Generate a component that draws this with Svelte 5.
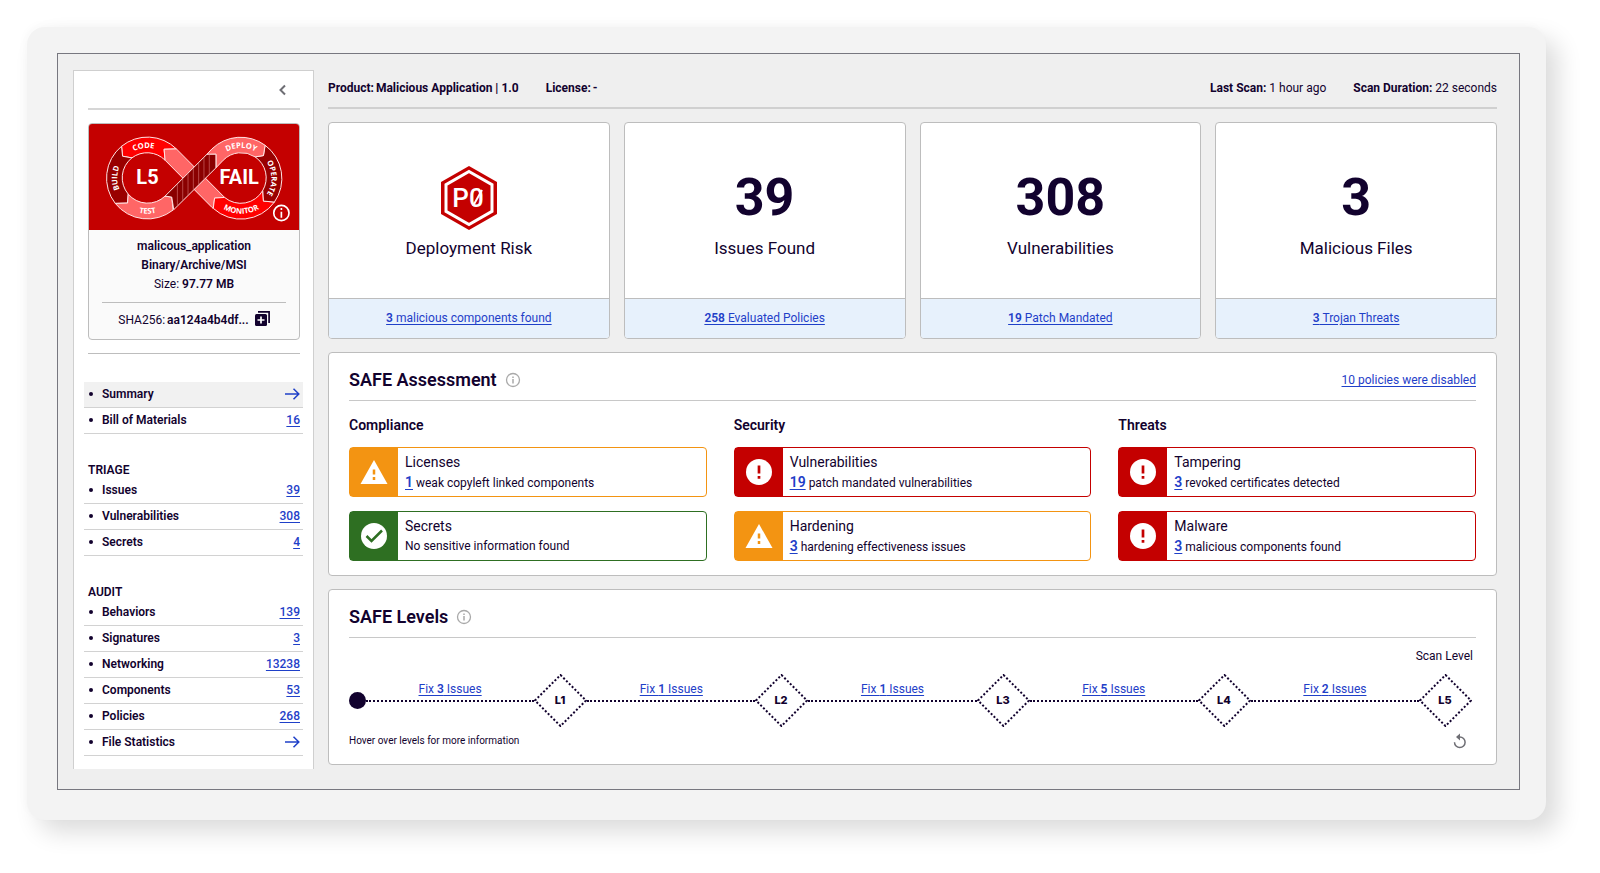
<script>
	const pages = [
		{ name: "Summary", count: null, active: true },
		{ name: "Bill of Materials", count: 16 }
	];

	const triage = [
		{ name: "Issues", count: 39 },
		{ name: "Vulnerabilities", count: 308 },
		{ name: "Secrets", count: 4 }
	];

	const audit = [
		{ name: "Behaviors", count: 139 },
		{ name: "Signatures", count: 3 },
		{ name: "Networking", count: 13238 },
		{ name: "Components", count: 53 },
		{ name: "Policies", count: 268 },
		{ name: "File Statistics", count: null }
	];

	const navGroups = [
		{ title: "", items: pages },
		{ title: "TRIAGE", items: triage },
		{ title: "AUDIT", items: audit }
	];

	const cards = [
		{ value: null, label: "Deployment Risk", count: 3, text: "malicious components found" },
		{ value: 39, label: "Issues Found", count: 258, text: "Evaluated Policies" },
		{ value: 308, label: "Vulnerabilities", count: 19, text: "Patch Mandated" },
		{ value: 3, label: "Malicious Files", count: 3, text: "Trojan Threats" }
	];

	const assessment = [
		{
			title: "Compliance",
			checks: [
				{ status: "warning", name: "Licenses", count: 1, text: "weak copyleft linked components" },
				{ status: "pass", name: "Secrets", count: 0, text: "No sensitive information found" }
			]
		},
		{
			title: "Security",
			checks: [
				{ status: "fail", name: "Vulnerabilities", count: 19, text: "patch mandated vulnerabilities" },
				{ status: "warning", name: "Hardening", count: 3, text: "hardening effectiveness issues" }
			]
		},
		{
			title: "Threats",
			checks: [
				{ status: "fail", name: "Tampering", count: 3, text: "revoked certificates detected" },
				{ status: "fail", name: "Malware", count: 3, text: "malicious components found" }
			]
		}
	];

	const levels = [
		{ name: "L1", fixes: 3 },
		{ name: "L2", fixes: 1 },
		{ name: "L3", fixes: 1 },
		{ name: "L4", fixes: 5 },
		{ name: "L5", fixes: 2 }
	];

	// vertical stripes on the release band of the loop
	const stripes = [274, 290, 306, 322, 338, 354, 370];
</script>

{#snippet infoIcon()}
	<svg class="info-icon" viewBox="0 0 16 16" width="16" height="16" aria-hidden="true">
		<circle cx="8" cy="8" r="6.5" fill="none" stroke="currentColor" stroke-width="1.3" />
		<path d="M8 7v4.4M8 4.4v1.5" stroke="currentColor" stroke-width="1.5" />
	</svg>
{/snippet}

<main>
	<div class="device">
		<div class="screen">
			<aside>
				<div class="collapse">
					<button aria-label="Collapse sidebar">
						<svg viewBox="0 0 10 12" width="10" height="12"><path d="M8 1.500L3.500 6L8 10.500" fill="none" stroke="#6e6e74" stroke-width="2" /></svg>
					</button>
				</div>

				<div class="file-card">
					<svg class="loop" viewBox="8 11 632 319" role="img">
						<defs>
							<path id="left-cw" d="M184 265A91 91 0 1 1 184.1 265" />
							<path id="left-ccw" d="M184 67A107 107 0 1 0 184.1 67" />
							<path id="right-cw" d="M466 265A91 91 0 1 1 466.1 265" />
							<path id="right-ccw" d="M466 67A107 107 0 1 0 466.1 67" />
						</defs>
						<g stroke="#ffe5e5" stroke-width="3" stroke-linejoin="round">
							<path fill="#ff0000" d="M106 78A124 124 0 0 1 271 86L234 87L237 120A76 76 0 0 0 137 113L109 108Z" />
							<path fill="#990000" d="M106 78L109 108L137 113A76 76 0 0 0 126 222L124 249L87 250A124 124 0 0 1 106 78Z" />
							<path fill="#ff6666" d="M87 250L124 249L126 222A76 76 0 0 0 237 228L257 231L261 270A124 124 0 0 1 87 250Z" />
							<path fill="#ff6666" d="M271 86L234 87L237 120L378 262L382 265L386 234L416 232L412 228Z" />
							<path fill="#ff0000" d="M382 265L386 234L416 232A76 76 0 0 0 531 211L533 243L566 246A124 124 0 0 1 382 265Z" />
							<path fill="#990000" d="M531 211L533 243L566 246A124 124 0 0 0 538 75L533 106L508 110A76 76 0 0 1 531 211Z" />
							<path fill="#ff6666" d="M538 75L533 106L508 110A76 76 0 0 0 412 120L390 143L390 102L362 103L378 86A124 124 0 0 1 538 75Z" />
							<path fill="#8a0000" d="M237 228L363 102L390 102L390 143L263 269L257 231Z" />
						</g>
						<g stroke="#d06a6a" stroke-width="2">
							{#each stripes as x}
								<line x1={x} y1={Math.max(466 - x, 103)} x2={x} y2={532 - x} />
							{/each}
						</g>
						<g class="loop-text">
							<text><textPath href="#left-cw" startOffset="25%">BUILD</textPath></text>
							<text><textPath href="#left-cw" startOffset="48%">CODE</textPath></text>
							<text><textPath href="#left-ccw" startOffset="50%">TEST</textPath></text>
							<text><textPath href="#right-cw" startOffset="50%">DEPLOY</textPath></text>
							<text><textPath href="#right-cw" startOffset="75%">OPERATE</textPath></text>
							<text><textPath href="#right-ccw" startOffset="50%">MONITOR</textPath></text>
						</g>
						<text class="loop-state" x="184" y="191">L5</text>
						<text class="loop-state" x="460" y="191">FAIL</text>
						<circle cx="587" cy="279" r="23" fill="none" stroke="#fff" stroke-width="5" />
						<path d="M587 275v18M587 264v6" stroke="#fff" stroke-width="5" />
					</svg>
					<div class="file-info">
						<b>malicous_application</b>
						<b>Binary/Archive/MSI</b>
						<span>Size: <b>97.77 MB</b></span>
						<div class="hash">
							<div class="pair"><span>SHA256:</span><b>aa124a4b4df...</b></div>
							<button aria-label="Copy hash">
								<svg viewBox="0 0 15 15" width="15" height="15">
									<path d="M3 .9h11.1V12" fill="none" stroke="#12022e" stroke-width="1.700" />
									<rect x="0" y="3" width="12" height="12" rx="1.500" fill="#12022e" />
									<path d="M6 5.500v7M2.500 9h7" stroke="#fff" stroke-width="1.700" />
								</svg>
							</button>
						</div>
					</div>
				</div>

				<hr />

				<nav>
					{#each navGroups as group}
						{#if group.title}
							<h3>{group.title}</h3>
						{/if}
						<ul>
							{#each group.items as item}
								<li class:active={item.active}>
									<span class="dot"></span>
									<span class="name">{item.name}</span>
									{#if item.count === null}
										<a href="#top" aria-label={item.name}>
											<svg viewBox="0 0 15 12" width="15" height="12"><path d="M0 6h13.500M8.500 .8L13.800 6L8.500 11.200" fill="none" stroke="#1f40c8" stroke-width="1.500" /></svg>
										</a>
									{:else}
										<a href="#top">{item.count}</a>
									{/if}
								</li>
							{/each}
						</ul>
					{/each}
				</nav>
			</aside>

			<div class="content">
				<header>
					<b class="pair"><span>Product:</span><span>Malicious Application | 1.0</span></b>
					<b class="pair"><span>License:</span><span>-</span></b>
					<span class="last-scan"><b>Last Scan:</b> 1 hour ago</span>
					<span><b>Scan Duration:</b> 22 seconds</span>
				</header>

				<section class="cards">
					{#each cards as card}
						<div class="card">
							<div class="card-body">
								{#if card.value === null}
									<svg class="risk" viewBox="0 0 58 64" width="58" height="64" role="img">
										<path d="M29 0L57 16V48L29 64L1 48V16Z" fill="#c40000" />
										<path d="M29 5.500L52 18.700V45.300L29 58.500L6 45.300V18.700Z" fill="none" stroke="#fff" stroke-width="3" />
										<text x="28" y="41">P0</text>
										<path d="M33 40L42 24" stroke="#fff" stroke-width="2" />
									</svg>
								{:else}
									<strong>{card.value}</strong>
								{/if}
								<span>{card.label}</span>
							</div>
							<div class="card-footer">
								<a href="#top"><b>{card.count}</b> {card.text}</a>
							</div>
						</div>
					{/each}
				</section>

				<section class="panel">
					<div class="panel-head">
						<h2>SAFE Assessment</h2>
						{@render infoIcon()}
						<a href="#top">10 policies were disabled</a>
					</div>
					<div class="groups">
						{#each assessment as group}
							<div class="group">
								<h3>{group.title}</h3>
								{#each group.checks as check}
									<div class="check {check.status}">
										<div class="check-icon">
											<svg viewBox="0 0 28 28" width="28" height="28" aria-hidden="true">
												{#if check.status === "warning"}
													<path d="M14 2L27.500 26H.5Z" fill="#fff" />
													<path d="M14 11.500v5M14 19v3" stroke="#f39412" stroke-width="2.500" />
												{:else if check.status === "pass"}
													<circle cx="14" cy="14" r="13" fill="#fff" />
													<path d="M6.500 14l5 5L22 8.500" fill="none" stroke="#2e6f22" stroke-width="2.500" />
												{:else}
													<circle cx="14" cy="14" r="13" fill="#fff" />
													<path d="M14 7.500v8M14 18v2.700" stroke="#c40000" stroke-width="2.700" />
												{/if}
											</svg>
										</div>
										<div class="check-text">
											<span>{check.name}</span>
											<p>
												{#if check.count}<a href="#top">{check.count}</a>{/if}
												{check.text}
											</p>
										</div>
									</div>
								{/each}
							</div>
						{/each}
					</div>
				</section>

				<section class="panel">
					<div class="panel-head">
						<h2>SAFE Levels</h2>
						{@render infoIcon()}
					</div>
					<div class="scan-level">Scan Level</div>
					<div class="track">
						<span class="start"></span>
						{#each levels as level}
							<div class="step">
								<a href="#top">Fix <b>{level.fixes}</b> Issues</a>
							</div>
							<svg class="level" viewBox="0 0 53 53" width="53" height="53" role="img">
								<path d="M26.500 1L52 26.500L26.500 52L1 26.500Z" fill="none" stroke="#12022e" stroke-width="2" stroke-dasharray="2 2" />
								<text x="26" y="30">{level.name}</text>
							</svg>
						{/each}
					</div>
					<div class="hint">
						<span>Hover over levels for more information</span>
						<button aria-label="Reset levels">
							<svg viewBox="0 0 14 16" width="14" height="16">
								<path d="M1.500 9.200A5.300 5.300 0 1 0 6.800 3.900H5" fill="none" stroke="#6e6e74" stroke-width="1.500" />
								<path d="M7 .5L3 4l4 3.500Z" fill="#6e6e74" />
							</svg>
						</button>
					</div>
				</section>
			</div>
		</div>
	</div>
</main>

<style>
	:global(body) {
		background: #fff;
	}

	main {
		--ink: #12022e;
		--link: #1f40c8;
		--line: #bdbdbd;
		--red: #c40000;

		padding: 27px 54px 54px 27px;
		font-family: Roboto, "Liberation Sans", sans-serif;
		font-size: 12px;
		color: var(--ink);
	}

	h2, h3, p, ul {
		margin: 0;
		padding: 0;
	}

	b {
		font-weight: 600;
	}

	a {
		color: var(--link);
		text-underline-offset: 2px;
	}

	button {
		display: flex;
		padding: 0;
		border: 0;
		background: none;
		cursor: pointer;
	}

	svg {
		display: block;
	}

	.pair {
		display: flex;
		gap: 2px;
	}

	.device {
		padding: 26px 26px 30px 30px;
		border-radius: 18px;
		background: #f3f3f3;
		box-shadow: 12px 12px 24px rgba(0, 0, 0, 0.14), -3px -3px 8px rgba(0, 0, 0, 0.02);
	}

	.screen {
		display: flex;
		align-items: flex-start;
		gap: 14px;
		padding: 16px 22px 20px 15px;
		border: 1px solid #77777f;
		background: #efefef;
	}

	/* sidebar */

	aside {
		flex: none;
		box-sizing: border-box;
		width: 241px;
		padding: 0 10px 13px;
		border: 1px solid #cfcfcf;
		border-bottom: 0;
		background: #fff;
	}

	.collapse {
		display: flex;
		justify-content: flex-end;
		align-items: center;
		height: 37px;
		margin: 0 3px 0 4px;
		padding-right: 13px;
		border-bottom: 2px solid #d6d6d6;
	}

	.file-card {
		margin: 13px 3px 13px 4px;
		border: 1px solid var(--line);
		border-radius: 4px;
		overflow: hidden;
		background: #fafafa;
	}

	.loop {
		width: 100%;
		background: var(--red);
	}

	.loop text {
		fill: #fff;
		text-anchor: middle;
		font-weight: 700;
	}

	.loop-text text {
		font-family: "Open Sans", sans-serif;
		font-size: 23px;
	}

	.loop .loop-state {
		font-size: 60px;
	}

	.file-info {
		display: flex;
		flex-direction: column;
		align-items: center;
		padding: 7px 13px 0;
		line-height: 19px;
	}

	.hash {
		display: flex;
		justify-content: center;
		gap: 6px;
		align-self: stretch;
		margin-top: 8px;
		padding: 8px 0 9px;
		border-top: 1px solid var(--line);
	}

	hr {
		margin: 0 3px 28px 4px;
		border: 0;
		border-top: 1px solid var(--line);
	}

	nav h3 {
		margin-top: 29px;
		padding-left: 4px;
		font-size: 12px;
		line-height: 15px;
		font-weight: 600;
	}

	ul {
		list-style: none;
	}

	li {
		display: flex;
		align-items: center;
		height: 25px;
		padding: 0 3px 0 5px;
		border-bottom: 1px solid #d2d2d2;
		font-weight: 600;
	}

	li.active {
		background: #f1f1f1;
	}

	li a {
		font-weight: 500;
	}

	.dot {
		width: 4px;
		height: 4px;
		margin-right: 9px;
		border-radius: 50%;
		background: var(--ink);
	}

	.name {
		flex: 1;
	}

	/* main column */

	.content {
		flex: 1;
		min-width: 0;
		display: flex;
		flex-direction: column;
		gap: 13px;
	}

	header {
		display: flex;
		gap: 27px;
		border-bottom: 2px solid #d0d0d0;
		line-height: 37px;
	}

	header b {
		font-weight: 700;
	}

	.last-scan {
		margin-left: auto;
	}

	.cards {
		display: grid;
		grid-template-columns: repeat(4, 1fr);
		gap: 14px;
	}

	.card, .panel {
		border: 1px solid var(--line);
		border-radius: 4px;
		background: #fff;
	}

	.card {
		overflow: hidden;
	}

	.card-body {
		display: flex;
		flex-direction: column;
		align-items: center;
		gap: 6px;
		padding: 43px 0 38px;
		font-size: 17px;
		line-height: 24px;
	}

	.card-body strong {
		font-size: 52px;
		line-height: 64px;
	}

	.risk text {
		fill: #fff;
		font-size: 26px;
		font-weight: 500;
		text-anchor: middle;
	}

	.card-footer {
		border-top: 1px solid var(--line);
		background: #e7f1fc;
		text-align: center;
		line-height: 39px;
	}

	.panel {
		padding: 0 20px 14px;
	}

	.panel-head {
		display: flex;
		align-items: center;
		gap: 8px;
		padding: 14px 0 7px;
		border-bottom: 1px solid #c8c8c8;
	}

	.panel-head a {
		margin-left: auto;
	}

	h2 {
		font-size: 18px;
		line-height: 26px;
		font-weight: 600;
	}

	.info-icon {
		color: #a9a9a9;
	}

	.groups {
		display: grid;
		grid-template-columns: repeat(3, 1fr);
		gap: 27px;
		padding-top: 14px;
	}

	.group h3 {
		margin-bottom: 12px;
		font-size: 14px;
		line-height: 20px;
		font-weight: 600;
	}

	.check {
		display: flex;
		height: 48px;
		border: 1px solid var(--status);
		border-radius: 4px;
	}

	.check + .check {
		margin-top: 14px;
	}

	.warning {
		--status: #f39412;
	}

	.pass {
		--status: #2e6f22;
	}

	.fail {
		--status: #c40000;
	}

	.check-icon {
		display: flex;
		align-items: center;
		justify-content: center;
		width: 48px;
		background: var(--status);
	}

	.check-text {
		display: flex;
		flex-direction: column;
		justify-content: center;
		padding-left: 7px;
		line-height: 20px;
	}

	.check-text span {
		font-size: 14px;
	}

	.check-text a {
		font-size: 14px;
		font-weight: 600;
	}

	.scan-level {
		padding: 9px 3px 0;
		text-align: right;
		line-height: 18px;
	}

	.track {
		display: flex;
		align-items: center;
		margin: 9px 4px 0 0;
	}

	.start {
		width: 17px;
		height: 17px;
		border-radius: 50%;
		background: var(--ink);
	}

	.step {
		flex: 1;
		padding-bottom: 22px;
		text-align: center;
		line-height: 22px;
	}

	.step::after {
		content: "";
		display: block;
		border-top: 2px dotted var(--ink);
	}

	.level text {
		fill: var(--ink);
		font-family: Inter, sans-serif;
		font-size: 11px;
		font-weight: 800;
		text-anchor: middle;
	}

	.hint {
		display: flex;
		justify-content: space-between;
		align-items: center;
		margin-top: 5px;
		padding-right: 9px;
		font-size: 10px;
		line-height: 18px;
	}
</style>
